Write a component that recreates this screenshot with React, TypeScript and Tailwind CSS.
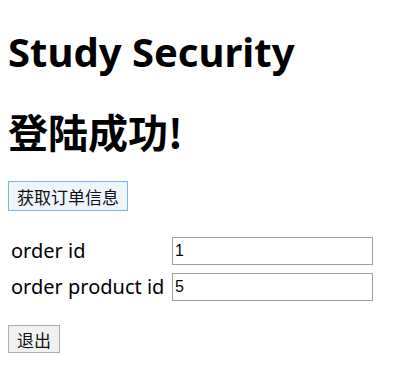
export default function App() {
  return (
    <div className="min-h-screen bg-white px-2 text-black font-['Noto_Sans','Noto_Sans_CJK_SC',sans-serif]">
      <h1 className="pt-[25px] text-[40px] font-bold leading-[53px]">Study Security</h1>
      <h1 className="mt-[27px] text-[40px] font-bold leading-[53px] font-['Noto_Sans_CJK_SC',sans-serif]">登陆成功!</h1>

      <button className="mt-[23px] h-[30px] border border-[#7eb4ea] bg-[#eef5fc] px-[8px] text-[17px] leading-none text-[#111] font-['Noto_Sans_CJK_SC',sans-serif]">
        获取订单信息
      </button>

      <div className="mt-[25px] grid grid-cols-[161px_201px] items-center gap-y-[6px] pl-[3px] text-[20px]">
        <span>order id</span>
        <input
          defaultValue="1"
          className="h-[28px] w-[201px] border border-[#a0a0a0] px-[2px] text-[16px] font-['Liberation_Sans',sans-serif] outline-none"
        />
        <span>order product id</span>
        <input
          defaultValue="5"
          className="h-[28px] w-[201px] border border-[#a0a0a0] px-[2px] text-[16px] font-['Liberation_Sans',sans-serif] outline-none"
        />
      </div>

      <button className="mt-[23px] block h-[28px] border border-[#adadad] bg-[#f1f1f1] px-[8px] text-[17px] leading-none text-[#111] font-['Noto_Sans_CJK_SC',sans-serif]">
        退出
      </button>
    </div>
  )
}
